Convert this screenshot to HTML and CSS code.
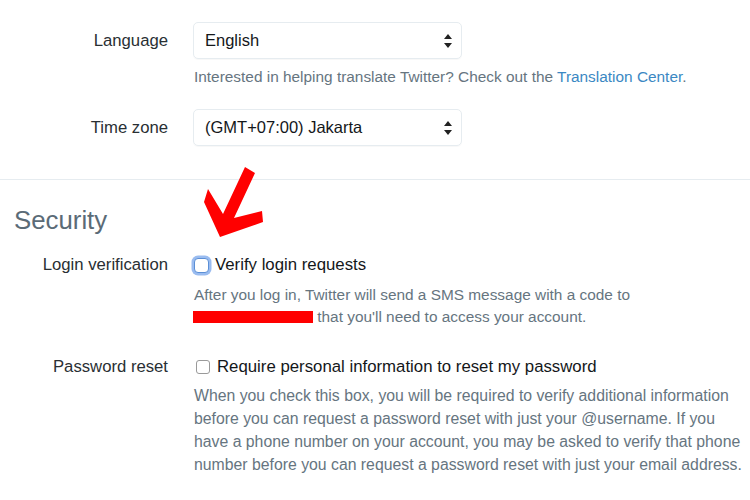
FILE: index.html
```html
<!DOCTYPE html>
<html>
<head>
<meta charset="utf-8">
<link rel="stylesheet" href="styles.css">
</head>
<body>
<div class="page">
  <section class="prefs">
    <div class="row row-select">
      <div class="label">Language</div>
      <div class="control">
        <div class="select"><span>English</span>
          <svg class="arrows" width="8" height="14" viewBox="0 0 8 14"><path d="M4 0 L8 5 L0 5 Z M0 9 L8 9 L4 14 Z" fill="#222"/></svg>
        </div>
      </div>
    </div>
    <div class="row">
      <div class="label"></div>
      <p class="help">Interested in helping translate Twitter? Check out the <a href="#">Translation Center</a>.</p>
    </div>
    <div class="row row-select second">
      <div class="label">Time zone</div>
      <div class="control">
        <div class="select"><span>(GMT+07:00) Jakarta</span>
          <svg class="arrows" width="8" height="14" viewBox="0 0 8 14"><path d="M4 0 L8 5 L0 5 Z M0 9 L8 9 L4 14 Z" fill="#222"/></svg>
        </div>
      </div>
    </div>
  </section>
  <hr class="divider">
  <section class="security">
    <h2>Security</h2>
    <div class="row row-check">
      <div class="label">Login verification</div>
      <div class="control">
        <label class="check"><span class="box focused"></span>Verify login requests</label>
        <p class="help">After you log in, Twitter will send a SMS message with a code to<br><span class="redact"></span> that you'll need to access your account.</p>
      </div>
    </div>
    <div class="row row-check pw">
      <div class="label">Password reset</div>
      <div class="control">
        <label class="check"><span class="box"></span>Require personal information to reset my password</label>
        <p class="help long">When you check this box, you will be required to verify additional information before you can request a password reset with just your @username. If you have a phone number on your account, you may be asked to verify that phone number before you can request a password reset with just your email address.</p>
      </div>
    </div>
  </section>
  <svg class="annot" width="750" height="500" viewBox="0 0 750 500">
    <polygon points="245,167 255,173 234,218 262,211 263,222 220,237 204,202 208,189 223,214" fill="#f00"/>
  </svg>
</div>
</body>
</html>
```
FILE: styles.css
```css
html, body {
  margin: 0;
  padding: 0;
  background: #fff;
}
body {
  font-family: "Liberation Sans", Arial, sans-serif;
  color: #292f33;
  width: 750px;
  height: 500px;
  overflow: hidden;
}
.page {
  position: relative;
  width: 750px;
  height: 500px;
}
.prefs {
  padding-top: 22px;
}
.row {
  display: grid;
  grid-template-columns: 168px 1fr;
  column-gap: 25px;
}
.label {
  text-align: right;
  font-size: 16.7px;
  color: #292f33;
}
.row-select .label {
  line-height: 37px;
}
.select {
  box-sizing: border-box;
  width: 269px;
  height: 37px;
  border: 1px solid #e6ecf0;
  border-radius: 5px;
  display: flex;
  align-items: center;
  justify-content: space-between;
  padding: 0 9px 0 11px;
  font-size: 16.5px;
  color: #14171a;
  box-shadow: 0 1px 1px rgba(0,0,0,0.03);
}
.arrows {
  display: block;
}
.help {
  margin: 0;
  font-size: 15.4px;
  line-height: 23px;
  color: #66757f;
}
.prefs .help {
  padding-top: 6px;
  margin-left: 1px;
}
.row.second {
  margin-top: 21px;
}
a {
  color: #3b88c3;
  text-decoration: none;
}
.divider {
  margin: 33px 0 0;
  border: 0;
  border-top: 1px solid #e6ecf0;
}
.security h2 {
  margin: 24px 0 0 14px;
  font-size: 25.8px;
  font-weight: normal;
  color: #5b6b77;
  line-height: 32px;
}
.row-check {
  margin-top: 17px;
}
.row-check .label {
  line-height: 24px;
}
.row-check.pw {
  margin-top: 27px;
}
.check {
  display: flex;
  align-items: center;
  font-size: 16.8px;
  line-height: 24px;
  color: #14171a;
}
.box {
  box-sizing: border-box;
  width: 14px;
  height: 14px;
  border: 1px solid #9a9a9a;
  border-radius: 3px;
  margin: 0 7px 0 3px;
  background: #fff;
}
.box.focused {
  width: 15px;
  height: 15px;
  margin: 0 6px 0 1px;
  border: 1.5px solid #5b8fd6;
  border-radius: 4px;
  box-shadow: 0 0 0 2.5px rgba(120,165,235,0.75);
}
.row-check .help {
  margin-top: 7px;
  margin-left: 1px;
  line-height: 22px;
}
.row-check .help.long {
  font-size: 15.8px;
  line-height: 23px;
  margin-top: 5px;
  max-width: 556px;
}
.redact {
  display: inline-block;
  width: 120px;
  height: 12px;
  background: #f00;
  vertical-align: -1px;
  margin-left: -1px;
}
.annot {
  position: absolute;
  left: 0;
  top: 0;
  pointer-events: none;
}
```
